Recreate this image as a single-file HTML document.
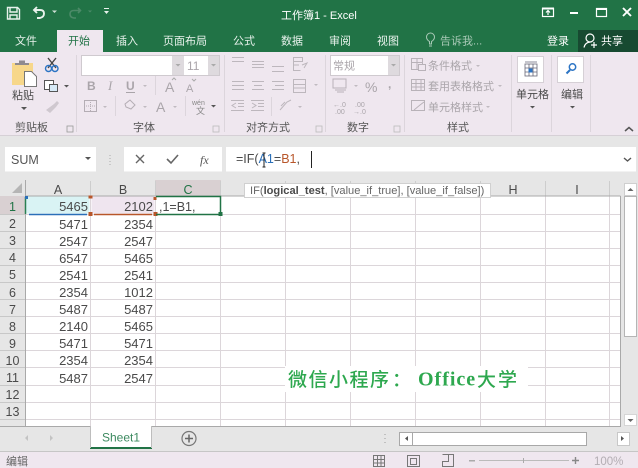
<!DOCTYPE html>
<html><head><meta charset="utf-8"><style>
html,body{margin:0;padding:0;background:#e6e6e6;width:638px;height:468px;overflow:hidden}
svg{display:block;filter:blur(.3px)}
text{font-family:"Liberation Sans","Noto Sans CJK SC",sans-serif;font-size:11px;fill:#4a4a4a}
.w{fill:#fff}.t{fill:#e8f2ec}.g{fill:#aaa5aa}.d{fill:#555}
.n{font-size:13px;fill:#4a4a4a;text-anchor:end}
.r{font-size:12.5px;fill:#4a4a4a;text-anchor:middle}
.h{font-size:12.5px;fill:#4a4a4a;text-anchor:middle}
.gl{stroke:#dcd6da;stroke-width:1;fill:none}
.ic{stroke:#b4adb4;fill:none;stroke-width:1}
.wm{font-size:19px;fill:#2ea84f;font-family:"Noto Sans CJK SC",sans-serif;font-weight:500}
</style></head><body>
<svg width="638" height="468" viewBox="0 0 638 468" xmlns="http://www.w3.org/2000/svg">
<!-- backgrounds -->
<rect width="638" height="468" fill="#e6e6e6"/>
<rect width="638" height="52" fill="#217346"/>
<rect y="52" width="638" height="84" fill="#efe7ef"/>
<rect y="135" width="638" height="1" fill="#d6d0d6"/>
<!-- quick access -->
<g fill="none" stroke="#e8f2ec" stroke-width="1.4">
<path d="M7.500 7.500h10l2 2v9.500h-12z"/><path d="M10 8v4h7v-4M10 19v-4h7v4"/>
<path d="M37 7l-3 3 3 3M34 10h6q4 0 4 3.500t-4 4.500h-3" stroke-width="1.900"/>
<path d="M78 8l2.500 2.500-2.500 2.500M80 10.500h-6q-4 0-4 3.500t4 4h2" stroke="#4c8a68" stroke-width="1.600"/>
</g>
<path d="M52 10.500h5l-2.500 2.500z" fill="#cfe0d6"/><path d="M88 10.500h4l-2 2z" fill="#4c8a68"/>
<path d="M104 8h5v1h-5zM104 11h5l-2.500 3z" fill="#e8f2ec"/>
<text x="281" y="19" class="w">工作簿1 - Excel</text>
<!-- window controls -->
<g fill="none" stroke="#fff" stroke-width="1.200">
<rect x="542.500" y="8.500" width="11" height="8"/><path d="M542 8.500h12" stroke-width="2"/><path d="M548 15v-4M546 12.500l2-2 2 2"/>
<path d="M570 13h8" stroke-width="2"/>
<rect x="596.500" y="8.500" width="10" height="8"/><path d="M596 9h11" stroke-width="2"/>
<path d="M623 8l8 8M631 8l-8 8" stroke-width="1.900"/>
</g>
<!-- tabs -->
<rect x="57" y="30" width="46" height="23" fill="#efe7ef"/>
<rect x="578" y="30" width="60" height="22" fill="#174a31"/>
<text x="15" y="44.500" class="t">文件</text>
<text x="68" y="44.500" style="fill:#217346">开始</text>
<text x="116" y="44.500" class="t">插入</text>
<text x="163" y="44.500" class="t">页面布局</text>
<text x="233" y="44.500" class="t">公式</text>
<text x="281" y="44.500" class="t">数据</text>
<text x="329" y="44.500" class="t">审阅</text>
<text x="377" y="44.500" class="t">视图</text>
<path d="M429.500 44v-2.500c-2.500-1.500-3-3-3-4.500a4 4 0 0 1 8 0c0 1.500-.5 3-3 4.500V44zM429 46h3" fill="none" stroke="#a8c9b6"/>
<text x="440" y="44.500" style="fill:#a8c9b6">告诉我...</text>
<text x="547" y="44.500" class="w">登录</text>
<circle cx="590" cy="38" r="4" fill="none" stroke="#fff" stroke-width="1.200"/>
<path d="M584 47.500q1-5 6-5.500M591 45h6M594 42v6" fill="none" stroke="#fff" stroke-width="1.200"/>
<text x="601" y="44.500" class="w">共享</text>
<!-- clipboard -->
<rect x="12" y="63" width="21" height="22" fill="#f7d78a"/>
<path d="M15 65v-2h4v-2.500h6v2.500h4v2z" fill="#8f8a8f"/>
<path d="M24.500 71.500h7l5 5v10h-12z" fill="#fff" stroke="#777"/>
<text x="12" y="99">粘贴</text>
<path d="M21 107h6l-3 3z" fill="#555"/>
<g stroke="#444" fill="none" stroke-width="1.400"><path d="M48 58l8 10M56 58l-8 10"/></g>
<circle cx="48.500" cy="68.500" r="3" fill="none" stroke="#2b74c4" stroke-width="1.400"/><circle cx="55" cy="68.500" r="3" fill="none" stroke="#2b74c4" stroke-width="1.400"/>
<rect x="44.500" y="80.500" width="9" height="9" fill="#fff" stroke="#555"/><rect x="49.500" y="84.500" width="8" height="7" fill="#d7eaf7" stroke="#555"/>
<path d="M64 85h5l-2.500 2.500z" fill="#555"/>
<path d="M46 110l8-6 3-3 2 2-3 4-6 6z" fill="#cfc8cf"/>
<text x="15" y="131" style="fill:#555">剪贴板</text>
<rect x="67" y="126" width="6" height="6" fill="none" stroke="#999" stroke-width=".8"/>
<rect x="76" y="55" width="1" height="77" fill="#dcd5dc"/>
<!-- font -->
<rect x="81.500" y="55.500" width="138" height="20" fill="#fff" stroke="#cfcacf"/>
<rect x="172" y="56" width="12" height="19" fill="#dedade"/><rect x="208" y="56" width="11" height="19" fill="#dedade"/>
<path d="M175.500 64h5l-2.500 2.500zM211 64h5l-2.500 2.500z" fill="#aaa"/>
<text x="187" y="70" class="g" style="font-size:12px">11</text>
<text x="87" y="90" class="g" style="font-weight:bold;font-size:12px">B</text>
<text x="108" y="90" class="g" style="font-family:'Liberation Serif';font-style:italic;font-size:13px">I</text>
<text x="126" y="90" class="g" style="font-weight:bold;font-size:12px">U</text><rect x="126" y="92" width="9" height="1" fill="#a9a4a9"/>
<path d="M143 85h4l-2 2z" fill="#c0bac0"/>
<rect x="155" y="76" width="1" height="19" fill="#dcd5dc"/>
<text x="165" y="92" class="g" style="font-size:14px">A</text><text x="186" y="92" class="g" style="font-size:11px">A</text>
<path d="M172 80l2-2 2 2M192 79l2 2 2-2" fill="none" stroke="#aaa"/>
<g class="ic"><rect x="84.500" y="100.500" width="12" height="11"/><path d="M90.500 100v12M84 106h13" stroke-dasharray="1 1"/></g>
<path d="M103 106h4l-2 2z" fill="#c0bac0"/>
<rect x="115" y="96" width="1" height="20" fill="#dcd5dc"/>
<path d="M125 104l5-4 5 5-4 4-5-2z" fill="none" stroke="#b4adb4"/><path d="M143 106h4l-2 2z" fill="#c0bac0"/>
<text x="156" y="112" class="g" style="font-size:14px">A</text><path d="M173 106h4l-2 2z" fill="#c0bac0"/>
<rect x="185" y="96" width="1" height="20" fill="#dcd5dc"/>
<text x="192" y="105" style="font-size:7px;fill:#888">wén</text><text x="196" y="114" style="font-size:9px;fill:#888">文</text>
<path d="M211 105h5l-2.500 2.500z" fill="#555"/>
<text x="133" y="131" style="fill:#555">字体</text>
<rect x="213" y="126" width="6" height="6" fill="none" stroke="#bbb" stroke-width=".8"/>
<rect x="224" y="55" width="1" height="77" fill="#dcd5dc"/>
<!-- alignment -->
<g stroke="#bdb7bd" stroke-width="1" fill="none">
<path d="M232 57.500h12M232 61.500h12"/>
<path d="M252 62.500h12M252 65.500h12M252 68.500h12" transform="translate(0 -1)"/>
<path d="M272 66.500h12M272 71.500h12"/>
<rect x="293.500" y="57.500" width="9" height="4"/><path d="M293 65h6M293.500 62v8.500h7"/>
<path d="M302 65l5-2-3 5"/>
<path d="M232 81.500h12M232 85.500h12M232 89.500h12"/>
<path d="M252 81.500h12M254 85.500h8M252 89.500h12"/>
<path d="M272 81.500h12M275 85.500h9M272 89.500h12"/>
<rect x="293.500" y="79.500" width="12" height="13"/><path d="M293 84.500h13M293 88h13"/>
<path d="M231 100.500h13M238 103.500h6M238 106.500h6M231 110.500h13M236 103l-4 2.500 4 2.500"/>
<path d="M251 100.500h13M258 103.500h6M258 106.500h6M251 110.500h13M252 103l4 2.500-4 2.500"/>
<path d="M280 110l7-8 4-2M281 106l4-4"/>
</g>
<path d="M314 84h4l-2 2zM298 106h4l-2 2z" fill="#c0bac0"/>
<rect x="271" y="97" width="1" height="19" fill="#dcd5dc"/>
<text x="246" y="131" style="fill:#555">对齐方式</text>
<rect x="316" y="126" width="6" height="6" fill="none" stroke="#bbb" stroke-width=".8"/>
<rect x="325" y="55" width="1" height="77" fill="#dcd5dc"/>
<!-- number -->
<rect x="330.500" y="55.500" width="69" height="20" fill="#fff" stroke="#cfcacf"/>
<rect x="388" y="56" width="11" height="19" fill="#dedade"/>
<path d="M391 64h5l-2.500 2.500z" fill="#aaa"/>
<text x="333" y="69.500" class="g">常规</text>
<rect x="333" y="79" width="13" height="9" fill="none" stroke="#b8b2b8"/><path d="M335 90h11M337 92h7" stroke="#b8b2b8"/>
<path d="M354 85h4l-2 2z" fill="#c0bac0"/>
<text x="365" y="92" class="g" style="font-size:14px">%</text>
<text x="388" y="88" class="g" style="font-weight:bold;font-size:12px">,</text>
<text x="333" y="107" style="font-size:7px;fill:#a9a4a9">←.0</text><text x="335" y="114" style="font-size:7px;fill:#a9a4a9">.00</text>
<text x="355" y="107" style="font-size:7px;fill:#a9a4a9">.00</text><text x="353" y="114" style="font-size:7px;fill:#a9a4a9">→.0</text>
<text x="347" y="131" style="fill:#555">数字</text>
<rect x="394" y="126" width="6" height="6" fill="none" stroke="#bbb" stroke-width=".8"/>
<rect x="404" y="55" width="1" height="77" fill="#dcd5dc"/>
<!-- styles -->
<g stroke="#b8b2b8" fill="none"><rect x="411.500" y="58.500" width="11" height="11"/><path d="M411 62.500h12M417 58v12"/><rect x="418.500" y="64.500" width="7" height="6" fill="#efe7ef"/>
<rect x="411.500" y="79.500" width="13" height="11"/><path d="M411 83.500h14M411 87h14M416 79v12M421 79v12"/>
<rect x="411.500" y="100.500" width="13" height="10"/><path d="M414 110l6-5 4-3"/></g>
<text x="428" y="69.500" class="g">条件格式</text><path d="M476 65h4l-2 2z" fill="#c0bac0"/>
<text x="428" y="90" class="g">套用表格格式</text><path d="M498 85h4l-2 2z" fill="#c0bac0"/>
<text x="428" y="111" class="g">单元格样式</text><path d="M486 106h4l-2 2z" fill="#c0bac0"/>
<text x="447" y="131" style="fill:#555">样式</text>
<rect x="511" y="55" width="1" height="77" fill="#dcd5dc"/>
<!-- cells / edit -->
<rect x="517.500" y="56.500" width="26" height="26" fill="#fff" stroke="#d6d0d6"/>
<g stroke="#667" fill="none" stroke-width=".8"><rect x="525" y="64" width="12" height="12"/><path d="M525 68h12M525 72h12M529 64v12M533 64v12M525 62h12"/></g>
<rect x="528.500" y="68.500" width="4" height="4" fill="#2b74c4"/>
<text x="516" y="98">单元格</text><path d="M530 106h5l-2.500 2.500z" fill="#555"/>
<rect x="551" y="55" width="1" height="77" fill="#dcd5dc"/>
<rect x="557.500" y="56.500" width="26" height="26" fill="#fff" stroke="#d6d0d6"/>
<circle cx="572.500" cy="67" r="3.200" fill="none" stroke="#2b74c4" stroke-width="1.500"/><path d="M570 70l-3.500 3.500" stroke="#2b74c4" stroke-width="2"/>
<text x="561" y="98">编辑</text><path d="M570 106h5l-2.500 2.500z" fill="#555"/>
<rect x="590" y="55" width="1" height="77" fill="#dcd5dc"/>
<path d="M625 131l4-3.500 4 3.500" fill="none" stroke="#555" stroke-width="1.500"/>

<!-- formula bar -->
<rect x="5" y="147" width="91" height="24.500" fill="#fff"/>
<text x="11" y="164" style="font-size:12.500px;fill:#555">SUM</text>
<path d="M85 157h6l-3 3z" fill="#555"/>
<path d="M110 155v1M110 158v1M110 161v1M110 164v1" stroke="#aaa"/>
<rect x="124" y="147" width="98" height="24.500" fill="#fff"/>
<path d="M136 155l8 8M144 155l-8 8" stroke="#666" stroke-width="1.400"/>
<path d="M167 159l4 4 7-8" fill="none" stroke="#666" stroke-width="1.600"/>
<text x="200" y="164" style="font-family:'Liberation Serif';font-style:italic;font-size:12px;fill:#555">fx</text>
<rect x="226" y="147" width="410" height="24.500" fill="#fff"/>
<text x="236" y="163" style="font-size:12.500px;fill:#4a4a4a">=IF(<tspan style="fill:#2a6fb8">A1</tspan>=<tspan style="fill:#b8562a">B1</tspan>,</text>
<rect x="311" y="151" width="1" height="17" fill="#222"/>
<path d="M262.500 153h3M262.500 167h3M264 153v14" stroke="#222" fill="none"/>
<path d="M624 158l3.500 3 3.500-3" fill="none" stroke="#555" stroke-width="1.400"/>

<!-- sheet -->
<rect x="25" y="196" width="595" height="230" fill="#fff"/>
<rect x="0" y="180" width="25" height="246" fill="#e6e6e6"/>
<rect x="25" y="180" width="595" height="16" fill="#e6e6e6"/>
<rect x="155" y="180" width="66" height="16" fill="#d9d0d2"/>
<rect x="0" y="196" width="25" height="18" fill="#d9d0d2"/>
<path d="M22 183v10h-10z" fill="#b5b5b5"/>
<g class="gl">
<path d="M25 214.500h595M25 231.500h595M25 248.500h595M25 265.500h595M25 282.500h595M25 299.500h595M25 316.500h595M25 333.500h595M25 350.500h595M25 367.500h595M25 385.500h595M25 402.500h595M25 419.500h595"/>
<path d="M90.500 196v230M155.500 196v230M220.500 196v230M285.500 196v230M350.500 196v230M415.500 196v230M480.500 196v230M545.500 196v230M609.500 196v230"/>
<path d="M0 214.500h25M0 231.500h25M0 248.500h25M0 265.500h25M0 282.500h25M0 299.500h25M0 316.500h25M0 333.500h25M0 350.500h25M0 367.500h25M0 385.500h25M0 402.500h25M0 419.500h25" stroke="#c8c8c8"/>
<path d="M90.500 181v15M155.500 181v15M220.500 181v15M285.500 181v15M350.500 181v15M415.500 181v15M480.500 181v15M545.500 181v15M609.500 181v15" stroke="#cdcdcd"/>
</g>
<path d="M25 196h595.500M620.500 196v230" stroke="#a9a9a9" fill="none"/>
<path d="M25.500 180v246" stroke="#a9a9a9"/>
<text x="58" y="194" class="h">A</text><text x="123" y="194" class="h">B</text><text x="188" y="194" class="h" style="fill:#217346">C</text>
<text x="513" y="194" class="h">H</text><text x="577" y="194" class="h">I</text>
<g><text x="12.500" y="211" class="r" style="fill:#217346">1</text><text x="12.500" y="228" class="r">2</text><text x="12.500" y="245" class="r">3</text><text x="12.500" y="262" class="r">4</text><text x="12.500" y="279" class="r">5</text><text x="12.500" y="297" class="r">6</text><text x="12.500" y="314" class="r">7</text><text x="12.500" y="331" class="r">8</text><text x="12.500" y="348" class="r">9</text><text x="12.500" y="365" class="r">10</text><text x="12.500" y="382" class="r">11</text><text x="12.500" y="399" class="r">12</text><text x="12.500" y="416" class="r">13</text></g>
<rect x="25.500" y="196.500" width="64" height="17" fill="#d9f3f4"/>
<rect x="91.500" y="196.500" width="63" height="17" fill="#efe5ef"/>
<g>
<text x="88" y="211" class="n">5465</text><text x="153" y="211" class="n">2102</text>
<text x="88" y="229" class="n">5471</text><text x="153" y="229" class="n">2354</text>
<text x="88" y="246" class="n">2547</text><text x="153" y="246" class="n">2547</text>
<text x="88" y="263" class="n">6547</text><text x="153" y="263" class="n">5465</text>
<text x="88" y="280" class="n">2541</text><text x="153" y="280" class="n">2541</text>
<text x="88" y="297" class="n">2354</text><text x="153" y="297" class="n">1012</text>
<text x="88" y="314" class="n">5487</text><text x="153" y="314" class="n">5487</text>
<text x="88" y="331" class="n">2140</text><text x="153" y="331" class="n">5465</text>
<text x="88" y="348" class="n">5471</text><text x="153" y="348" class="n">5471</text>
<text x="88" y="365" class="n">2354</text><text x="153" y="365" class="n">2354</text>
<text x="88" y="383" class="n">5487</text><text x="153" y="383" class="n">2547</text>
</g>
<!-- range highlights -->
<path d="M29 214.500h58" stroke="#2a6fb8" stroke-width="1.500"/><path d="M25.500 197v17" stroke="#2a7f52" stroke-width="1.500"/>
<path d="M94 214.500h58" stroke="#b8562a" stroke-width="1.500"/>
<rect x="88.500" y="195.500" width="4" height="3" fill="#b8562a"/><rect x="88.500" y="212" width="4" height="4" fill="#b8562a"/>
<rect x="153.500" y="197" width="3" height="3" fill="#b8562a"/><rect x="153.500" y="212" width="4" height="4" fill="#b8562a"/>
<rect x="25" y="196" width="3" height="3" fill="#2a6fb8"/>
<path d="M156 196.500h64.500v18H156" fill="none" stroke="#217346" stroke-width="1.500"/>
<rect x="218.500" y="212" width="4" height="4" fill="#217346"/>
<text x="159" y="211" style="font-size:12.500px">,1=B1,</text>
<!-- tooltip -->
<rect x="244.500" y="183.500" width="246" height="14" fill="#fff" stroke="#d0d0d0"/>
<text x="250" y="194" style="font-size:11.100px;fill:#666">IF(<tspan style="font-weight:bold;fill:#4a4a4a">logical_test</tspan>, [value_if_true], [value_if_false])</text>
<!-- watermark -->
<rect x="285" y="366" width="243" height="26" fill="#fff"/>
<text x="288" y="386" class="wm" style="letter-spacing:1.500px">微信小程序</text>
<text x="392" y="386" class="wm">：</text>
<text x="418" y="385.500" style="font-size:20px;font-weight:bold;font-family:'Liberation Serif',serif;fill:#2ea84f;letter-spacing:1px">Office</text>
<text x="477" y="386" class="wm" style="letter-spacing:2px">大学</text>
<!-- scrollbar -->
<rect x="621" y="180" width="17" height="246" fill="#e6e6e6"/>
<rect x="624.500" y="183.500" width="12" height="12" fill="#fff" stroke="#cfcfcf"/>
<path d="M627.500 191l3-3 3 3z" fill="#666"/>
<rect x="624.500" y="196.500" width="12" height="140" fill="#fff" stroke="#b5b5b5"/>
<rect x="624.500" y="414.500" width="12" height="11" fill="#fff" stroke="#d5d5d5"/><path d="M627.500 419h6l-3 3z" fill="#666"/>
<!-- tab bar -->
<rect y="426" width="638" height="25" fill="#e6e6e6"/>
<rect y="426" width="621" height="1" fill="#a9a9a9"/>
<rect x="90" y="426" width="62" height="22" fill="#fff"/>
<rect x="90" y="447" width="62" height="2" fill="#217346"/>
<path d="M90.500 426v22M151.500 426v22" stroke="#bdbdbd"/>
<text x="102" y="441.500" style="font-size:12px;fill:#3d8a60">Sheet1</text>
<path d="M28 435v6l-3-3zM50 435v6l3-3z" fill="#c3c3c3"/>
<circle cx="189" cy="438.500" r="7" fill="none" stroke="#777" stroke-width="1.200"/><path d="M185 438.500h8M189 434.500v8" stroke="#666" stroke-width="1.500"/>
<path d="M385 434v1M385 438v1M385 442v1" stroke="#999"/>
<rect x="399.500" y="432.500" width="187" height="13" fill="#fff" stroke="#a8a8a8"/>
<rect x="412" y="433" width="1" height="12" fill="#a8a8a8"/>
<path d="M408 436v5l-3-2.500z" fill="#555"/>
<rect x="617.500" y="432.500" width="12" height="13" fill="#fff" stroke="#c8c8c8"/><path d="M621 436v5l3-2.500z" fill="#555"/>
<!-- status bar -->
<rect y="451" width="638" height="17" fill="#efe7ef"/>
<rect y="451" width="638" height="1" fill="#c6c6c6"/>
<text x="6" y="465" style="fill:#666">编辑</text>
<g fill="none" stroke="#777"><rect x="373.500" y="455.500" width="11" height="11"/><path d="M373 459.500h12M373 463h12M377.500 455v12M381 455v12"/>
<rect x="407.500" y="455.500" width="12" height="11"/><rect x="410.500" y="458.500" width="6" height="6"/>
<path d="M442.500 454.500h11v12h-11v-5h6v-7"/></g>
<rect x="469" y="460" width="6" height="1.500" fill="#aaa"/><rect x="479" y="460" width="90" height="1" fill="#bbb"/><rect x="523" y="458" width="1" height="5" fill="#aaa"/>
<path d="M572 460.500h7M575.500 457v7" stroke="#888" stroke-width="1.400"/>
<text x="594" y="465" style="font-size:11.500px;fill:#b3adb3">100%</text>
</svg>
</body></html>
